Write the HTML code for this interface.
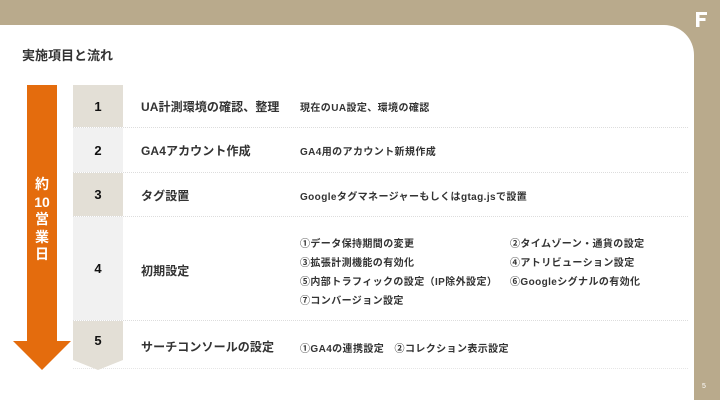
<!DOCTYPE html>
<html><head><meta charset="utf-8"><style>
*{margin:0;padding:0;box-sizing:border-box}
body{width:720px;height:400px;background:#b9aa8c;position:relative;overflow:hidden;font-family:"Liberation Sans","Noto Sans CJK JP",sans-serif;color:#333}
.panel{position:absolute;left:0;top:25px;width:694px;height:375px;background:#fff;border-top-right-radius:30px}
.title{position:absolute;left:22px;top:45px;font-size:13px;font-weight:bold;color:#333}
.shaft{position:absolute;left:27px;top:85px;width:30px;height:257px;background:#e46c0d}
.head{position:absolute;left:13px;top:341px;width:0;height:0;border-left:29.5px solid transparent;border-right:29.5px solid transparent;border-top:29px solid #e46c0d}
.vt{position:absolute;left:27px;top:176px;width:30px;text-align:center;color:#fff;font-size:14px;font-weight:bold;line-height:17.5px}
.row{position:absolute;left:73px;width:615px;border-bottom:1px dotted #ddd}
.num{position:absolute;left:0;top:0;bottom:0;width:50px;display:flex;align-items:center;justify-content:center;font-size:13px;font-weight:bold;color:#111}
.b{background:#e3dfd6}.g{background:#f1f1f1}
.c2{position:absolute;left:68px;font-size:12px;font-weight:bold;color:#333;letter-spacing:.1px}
.c3{position:absolute;left:227px;font-size:10px;font-weight:bold;color:#333;letter-spacing:.4px;white-space:nowrap}
.pg{position:absolute;left:702px;top:383px;font-size:7px;color:#fff}
</style></head><body>
<div class="panel"></div>
<svg style="position:absolute;left:696px;top:12px" width="12" height="15"><path d="M0 0H11V3H3.5V6H9.5V9H3.5V15H0Z" fill="#fff"/></svg>
<div class="title">実施項目と流れ</div>
<div class="shaft"></div><div class="head"></div>
<div class="vt">約<br>10<br>営<br>業<br>日</div>

<div class="row" style="top:85px;height:43px"><div class="num b">1</div><div class="c2" style="top:13px">UA計測環境の確認、整理</div><div class="c3" style="top:14px">現在のUA設定、環境の確認</div></div>
<div class="row" style="top:128px;height:45px"><div class="num g">2</div><div class="c2" style="top:14px">GA4アカウント作成</div><div class="c3" style="top:15px">GA4用のアカウント新規作成</div></div>
<div class="row" style="top:173px;height:44px"><div class="num b">3</div><div class="c2" style="top:14px">タグ設置</div><div class="c3" style="top:15px">Googleタグマネージャーもしくはgtag.jsで設置</div></div>
<div class="row" style="top:217px;height:104px"><div class="num g">4</div><div class="c2" style="top:45px">初期設定</div>
<div class="c3" style="top:18px">①データ保持期間の変更</div><div class="c3" style="top:37px">③拡張計測機能の有効化</div><div class="c3" style="top:56px">⑤内部トラフィックの設定（IP除外設定）</div><div class="c3" style="top:75px">⑦コンバージョン設定</div>
<div class="c3" style="left:437px;top:18px">②タイムゾーン・通貨の設定</div><div class="c3" style="left:437px;top:37px">④アトリビューション設定</div><div class="c3" style="left:437px;top:56px">⑥Googleシグナルの有効化</div>
</div>
<div class="row" style="top:321px;height:48px;border-bottom-color:#e6e6e6">
<svg style="position:absolute;left:0;top:0" width="50" height="49"><path d="M0 0H50V39L25 49L0 39Z" fill="#e3dfd6"/></svg>
<div class="num" style="height:39px">5</div><div class="c2" style="top:17px">サーチコンソールの設定</div><div class="c3" style="top:19px">①GA4の連携設定　②コレクション表示設定</div></div>
<div class="pg">5</div>
</body></html>
